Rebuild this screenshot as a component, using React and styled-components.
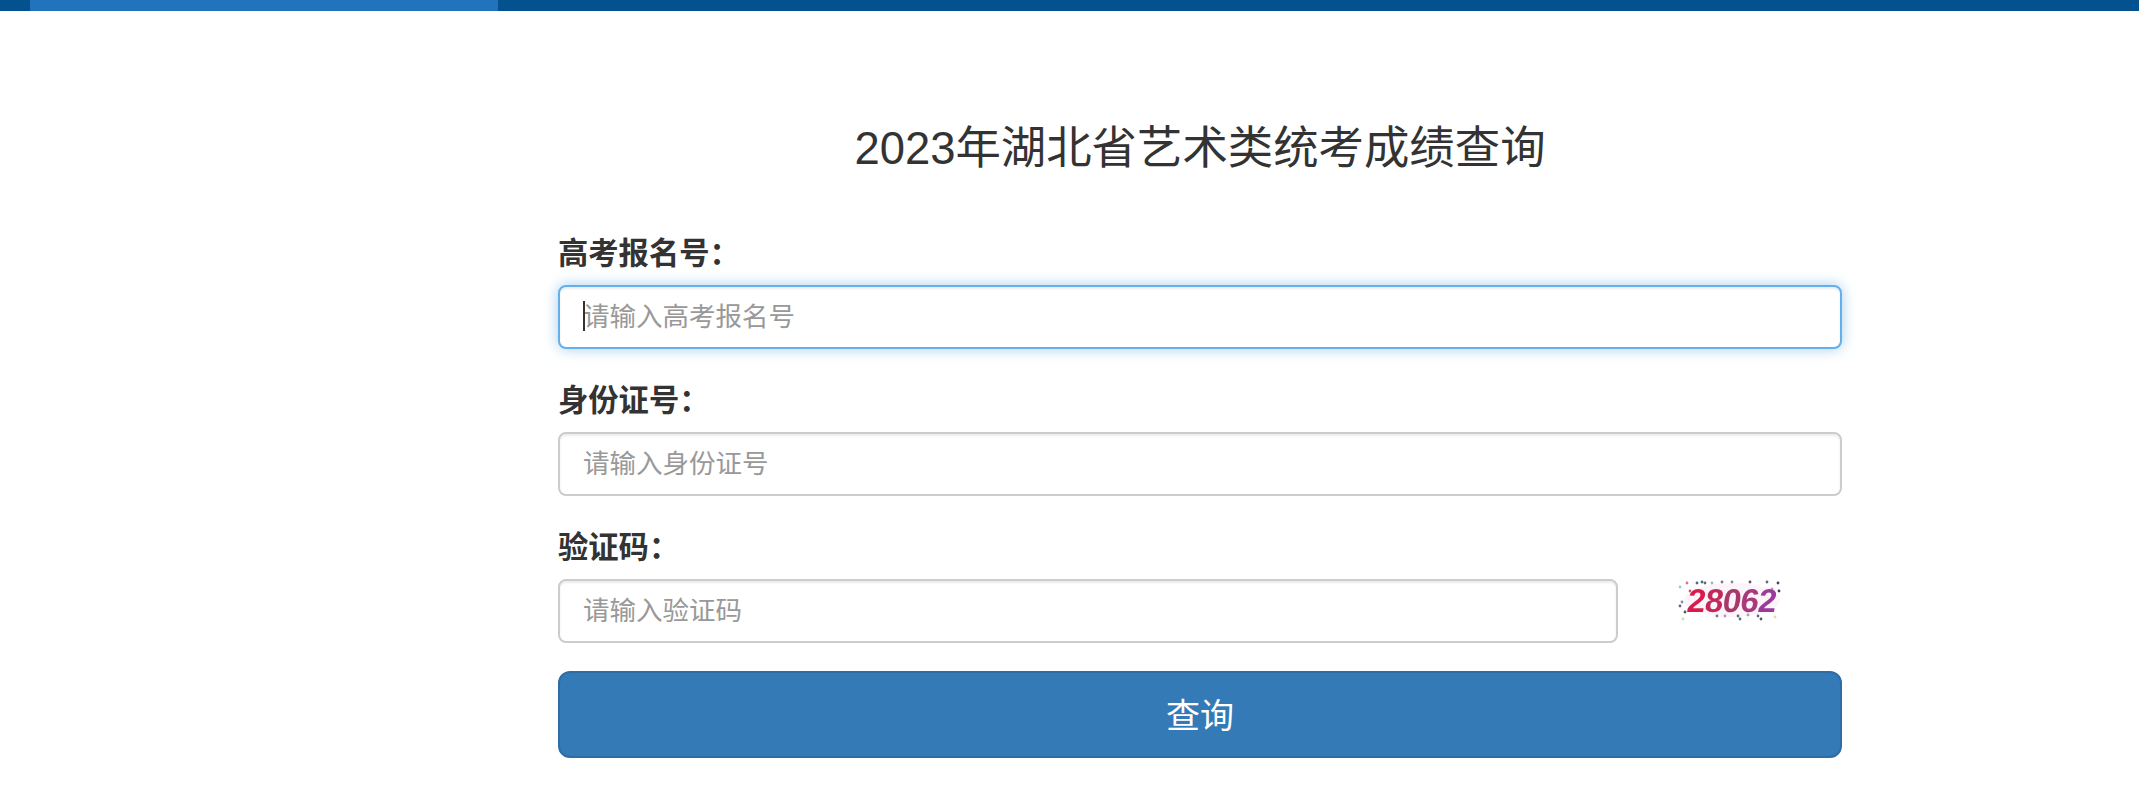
import React from "react";
import styled, { createGlobalStyle } from "styled-components";

const FONT = `"Liberation Sans", "Noto Sans CJK SC", sans-serif`;

const GlobalStyle = createGlobalStyle`
    html, body {
        margin: 0;
        background: #fff;
    }
    body {
        font-family: ${FONT};
        color: #333;
    }
`;

const TopBar = styled.div`
    height: 11px;
    background: #03528f;
    padding-left: 30px;
`;

const TopBarActive = styled.div`
    width: 468px;
    height: 100%;
    background: #2173bb;
`;

const Wrapper = styled.div`
    width: 1284px;
    margin-left: 558px;
`;

const Title = styled.h3`
    margin: 0;
    padding-top: 105px;
    line-height: 66px;
    font-size: 45.4px;
    font-weight: 400;
    text-align: center;
    color: #333;
`;

const Form = styled.form`
    display: flex;
    flex-direction: column;
    margin-top: 49px;
`;

const Field = styled.div`
    display: flex;
    flex-direction: column;
    margin-bottom: 29px;
`;

const Label = styled.label`
    font-size: 30.3px;
    font-weight: 700;
    line-height: 46px;
    margin-bottom: 8px;
`;

const Row = styled.div`
    display: flex;
    align-items: flex-start;
`;

const Input = styled.div`
    box-sizing: border-box;
    width: ${({ $short }) => ($short ? "1060px" : "100%")};
    position: relative;
    height: 64px;
    padding: 0 23px 5px;
    display: flex;
    align-items: center;
    font-size: 26.5px;
    color: #999;
    background: #fff;
    border: 2px solid ${({ $focus }) => ($focus ? "#66afe9" : "#ccc")};
    border-radius: 8px;
    box-shadow: inset 0 2px 2px rgba(0, 0, 0, 0.075)
        ${({ $focus }) => ($focus ? ", 0 0 14px rgba(102, 175, 233, 0.6)" : "")};
`;

const Caret = styled.span`
    position: absolute;
    left: 23px;
    top: 14px;
    width: 2px;
    height: 30px;
    background: #333;
`;

const CaptchaImage = styled.svg`
    margin-left: 42px;
    margin-top: -10px;
    filter: blur(0.6px);
`;

const SubmitButton = styled.button`
    box-sizing: border-box;
    width: 100%;
    height: 87px;
    margin-top: -1px;
    padding: 0 0 3px;
    font-family: ${FONT};
    font-size: 34px;
    color: #fff;
    background: #337ab7;
    border: 2px solid #2e6da4;
    border-radius: 12px;
`;

const dots = [
    [20, 18, "#8fd3c9"], [27, 14, "#e56b8a"], [37, 14, "#556677"], [42, 13, "#556677"], [45, 14, "#668"],
    [52, 14, "#9bb"], [62, 13, "#778"], [72, 13, "#889"], [90, 13, "#556"], [107, 13, "#667"], [118, 14, "#445"],
    [112, 20, "#c9a"], [119, 22, "#334466"], [22, 33, "#88a"], [20, 37, "#667"], [25, 43, "#556"],
    [23, 50, "#cdb"], [57, 47, "#778"], [65, 47, "#a9b"], [78, 47, "#668"], [80, 50, "#477"],
    [88, 46, "#9ab"], [98, 47, "#668"], [101, 50, "#556"], [115, 48, "#dda"], [30, 22, "#c56"],
];

const Captcha = () => (
    <CaptchaImage width="130" height="60" viewBox="0 0 130 60">
        <ellipse cx="72" cy="31" rx="48" ry="17" fill="#fdf4f9" />
        {dots.map(([x, y, c], i) => (
            <circle key={i} cx={x} cy={y} r="1.4" fill={c} />
        ))}
        <text
            transform="translate(26 43) skewX(-8)"
            fontFamily={FONT}
            fontSize="33"
            fontWeight="700"
            letterSpacing="-0.6"
            fill="#d81b4e"
        >
            2<tspan fill="#c02a5a">8</tspan>
            <tspan fill="#a8386a">0</tspan>
            <tspan fill="#a83a7c">6</tspan>
            <tspan fill="#9c3a9c">2</tspan>
        </text>
    </CaptchaImage>
);

const App = () => (
    <>
        <GlobalStyle />
        <TopBar>
            <TopBarActive />
        </TopBar>
        <Wrapper>
            <Title>2023年湖北省艺术类统考成绩查询</Title>
            <Form>
                <Field>
                    <Label>高考报名号：</Label>
                    <Input $focus>
                        <Caret />
                        请输入高考报名号
                    </Input>
                </Field>
                <Field>
                    <Label>身份证号：</Label>
                    <Input>请输入身份证号</Input>
                </Field>
                <Field>
                    <Label>验证码：</Label>
                    <Row>
                        <Input $short>请输入验证码</Input>
                        <Captcha />
                    </Row>
                </Field>
                <SubmitButton type="button">查询</SubmitButton>
            </Form>
        </Wrapper>
    </>
);

export default App;
